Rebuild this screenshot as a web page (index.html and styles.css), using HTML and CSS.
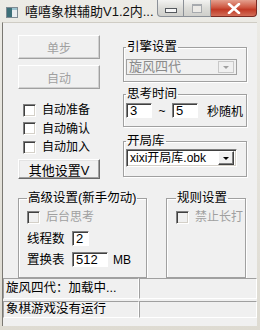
FILE: index.html
```html
<!DOCTYPE html>
<html>
<head>
  <meta charset="UTF-8">
  <title>嘻嘻象棋辅助V1.2</title>
  <link rel="stylesheet" href="styles.css">
</head>
<body>
  <div class="window">
    <div class="titlebar">
      <svg class="app-icon" width="12" height="11" viewBox="0 0 12 11">
        <rect x="0.5" y="0.5" width="11" height="10" fill="#e8ecef" stroke="#7d8a93"/>
        <rect x="1" y="1" width="5" height="9" fill="#3d6f78"/>
        <rect x="6" y="1" width="5" height="2" fill="#9cc3cf"/>
      </svg>
      <span class="title">嘻嘻象棋辅助V1.2内...</span>
      <div class="caption">
        <span class="cap-btn min"><i></i></span>
        <span class="cap-btn max"><i></i></span>
        <span class="cap-btn close">
          <svg width="14" height="11" viewBox="0 0 14 11">
            <path d="M2 1 L12 10 M12 1 L2 10" stroke="#fff" stroke-width="2.6" stroke-linecap="round"/>
          </svg>
        </span>
      </div>
    </div>

    <div class="client">
      <div class="top">
        <div class="left-col">
          <button class="btn big" disabled>单步</button>
          <button class="btn big" disabled>自动</button>
          <div class="checks">
            <label class="check"><span class="box"></span>自动准备</label>
            <label class="check"><span class="box"></span>自动确认</label>
            <label class="check"><span class="box"></span>自动加入</label>
          </div>
          <button class="btn small">其他设置V</button>
        </div>

        <div class="right-col">
          <fieldset class="group engine">
            <legend>引擎设置</legend>
            <div class="combo disabled">
              <span class="combo-text">旋风四代</span>
              <span class="drop"><i></i></span>
            </div>
          </fieldset>

          <fieldset class="group think">
            <legend>思考时间</legend>
            <div class="think-row">
              <span class="field w-time">3</span>
              <span class="tilde">~</span>
              <span class="field w-time">5</span>
              <span class="unit">秒随机</span>
            </div>
          </fieldset>

          <fieldset class="group book">
            <legend>开局库</legend>
            <div class="combo">
              <span class="combo-text">xixi开局库.obk</span>
              <span class="drop"><i></i></span>
            </div>
          </fieldset>
        </div>
      </div>

      <div class="bottom">
        <fieldset class="group adv">
          <legend>高级设置(新手勿动)</legend>
          <label class="check disabled"><span class="box"></span>后台思考</label>
          <div class="row">
            <span class="row-label">线程数</span>
            <span class="field w-thread">2</span>
          </div>
          <div class="row">
            <span class="row-label">置换表</span>
            <span class="field w-hash">512</span>
            <span class="unit">MB</span>
          </div>
        </fieldset>

        <fieldset class="group rules">
          <legend>规则设置</legend>
          <label class="check disabled"><span class="box"></span>禁止长打</label>
        </fieldset>
      </div>

      <div class="status">
        <div class="pane first">旋风四代：加载中...</div>
        <div class="pane"></div>
      </div>
      <div class="status">
        <div class="pane first">象棋游戏没有运行</div>
        <div class="pane"></div>
      </div>
    </div>
  </div>
</body>
</html>
```

FILE: styles.css
```css
body {
  margin: 0;
  font-family: "Liberation Sans", "Noto Sans CJK SC", sans-serif;
  font-size: 12px;
  color: #000;
  background: #fff;
}
.window {
  width: 260px;
  height: 330px;
  box-sizing: border-box;
  background: linear-gradient(#ecebe6, #dedbd2);
  padding: 0 3px 4px 2px;
  display: flex;
  flex-direction: column;
}

/* title bar */
.titlebar {
  height: 22px;
  display: flex;
  align-items: flex-start;
  flex-shrink: 0;
}
.app-icon {
  margin: 7px 0 0 4px;
}
.title {
  margin: 4px 0 0 7px;
  font-size: 13px;
  line-height: 15px;
  color: #111;
  white-space: nowrap;
  flex: 1;
}
.caption {
  display: flex;
}
.cap-btn {
  height: 17px;
  box-sizing: border-box;
  border: 1px solid #8b9097;
  border-top: none;
  display: flex;
  align-items: center;
  justify-content: center;
}
.cap-btn.min {
  width: 27px;
  border-radius: 0 0 0 4px;
  background: linear-gradient(#f3f3f1, #dcdcd8 50%, #cfcfcb);
}
.cap-btn.max {
  width: 27px;
  border-left: none;
  background: linear-gradient(#f3f3f1, #dcdcd8 50%, #cfcfcb);
}
.cap-btn.min i {
  width: 10px;
  height: 3px;
  margin-top: 4px;
  background: #f6f6f6;
  border: 1px solid #55595e;
}
.cap-btn.max i {
  width: 8px;
  height: 6px;
  border: 1px solid #a7aaae;
  border-top-width: 2px;
  background: #eceae6;
}
.cap-btn.close {
  width: 46px;
  border-color: #7a2a22;
  border-left: none;
  border-radius: 0 0 4px 0;
  background: linear-gradient(#e4a08e, #cf5a44 45%, #c13a26 60%, #d26e58);
}

/* client area */
.client {
  flex: 1;
  background: #f0f0f0;
  border-left: 1px solid #7a7872;
  border-top: 1px solid #cfccc4;
  padding-left: 15px;
  display: flex;
  flex-direction: column;
}
.top {
  display: flex;
  align-items: flex-start;
  height: 161px;
}
.left-col {
  width: 82px;
  padding-top: 12px;
  display: flex;
  flex-direction: column;
}
.right-col {
  width: 124px;
  margin-left: 23px;
  padding-top: 17px;
}

/* buttons */
.btn {
  font: inherit;
  padding: 0;
  background: #f0f0f0;
  border: 1px solid;
  border-color: #fff #696969 #696969 #fff;
  box-shadow: inset -1px -1px #a0a0a0, inset 1px 1px #e3e3e3;
  color: #000;
}
.btn.big {
  height: 24px;
  margin-bottom: 6px;
}
.btn:disabled {
  color: #a0a0a0;
  border-color: #fff #a0a0a0 #a0a0a0 #fff;
  box-shadow: inset -1px -1px #d0d0d0;
}
.btn.small {
  height: 20px;
  margin-top: 2px;
  font-size: 13px;
}

/* checkboxes */
.checks {
  padding: 6px 0 0 5px;
}
.check {
  display: flex;
  align-items: center;
  height: 18.5px;
  line-height: 14px;
  white-space: nowrap;
}
.box {
  flex-shrink: 0;
  width: 11px;
  height: 11px;
  margin-right: 6px;
  background: #fff;
  border: 1px solid;
  border-color: #808080 #fff #fff #808080;
  box-shadow: inset 1px 1px #404040, inset -1px -1px #d4d0c8;
}
.check.disabled {
  color: #a0a0a0;
}
.check.disabled .box {
  background: #f0f0f0;
}

/* group boxes */
.group {
  margin: 0;
  min-width: 0;
  border: 1px solid #a0a0a0;
  box-shadow: inset 1px 1px #fff, 1px 1px #fff;
  padding: 0 4px 0 2px;
}
.group legend {
  padding: 0 1px;
  line-height: 14px;
  font-size: 12.5px;
}
.engine {
  padding-top: 5px;
  padding-bottom: 6px;
}
.think {
  margin-top: 5px;
  padding: 0 1px 7px 2px;
}
.book {
  margin-top: 7px;
  padding-top: 1px;
  padding-bottom: 9px;
}

/* combos and fields */
.combo {
  height: 18px;
  box-sizing: border-box;
  display: flex;
  align-items: center;
  background: #fff;
  border: 1px solid;
  border-color: #808080 #fff #fff #808080;
  box-shadow: inset 1px 1px #404040, inset -1px -1px #d4d0c8;
  padding: 0 2px 0 3px;
  width: 111px;
}
.combo.disabled {
  height: 16px;
  background: #f0f0f0;
  color: #8a8a8a;
  border-color: #a0a0a0;
  box-shadow: none;
  padding-left: 2px;
  font-size: 13px;
}
.combo-text {
  flex: 1;
  line-height: 14px;
  white-space: nowrap;
}
.drop {
  width: 16px;
  height: 14px;
  box-sizing: border-box;
  background: #f0f0f0;
  border: 1px solid;
  border-color: #fff #404040 #404040 #fff;
  box-shadow: inset -1px -1px #808080;
  display: flex;
  align-items: center;
  justify-content: center;
}
.drop i {
  width: 0;
  height: 0;
  border-left: 3px solid transparent;
  border-right: 3px solid transparent;
  border-top: 3px solid #000;
}
.combo.disabled .drop {
  height: 12px;
  border-color: #c8c8c8;
  box-shadow: none;
}
.combo.disabled .drop i {
  border-top-color: #a0a0a0;
}

.field {
  display: inline-block;
  flex-shrink: 0;
  box-sizing: border-box;
  height: 15px;
  line-height: 13px;
  padding-left: 3px;
  background: #fff;
  border: 1px solid;
  border-color: #808080 #fff #fff #808080;
  box-shadow: inset 1px 1px #404040;
  font-size: 13px;
}
.think-row {
  display: flex;
  align-items: center;
  padding-top: 1px;
  white-space: nowrap;
}
.w-time {
  width: 26px;
}
.tilde {
  width: 20px;
  flex-shrink: 0;
  text-align: center;
}
.think-row .unit {
  flex-shrink: 0;
  margin-left: 9px;
}

/* bottom groups */
.bottom {
  display: flex;
  align-items: flex-start;
  margin-top: 7px;
}
.adv {
  width: 129px;
  box-sizing: border-box;
  padding: 0 0 8px 8px;
  height: 87px;
}
.rules {
  width: 80px;
  box-sizing: border-box;
  margin-left: 19px;
  padding: 0 0 0 9px;
  height: 87px;
}
.adv .check,
.rules .check {
  height: 16px;
  margin-top: 4px;
}
.row {
  display: flex;
  align-items: center;
  margin-top: 6px;
}
.row-label {
  width: 45px;
  line-height: 14px;
  font-size: 12.5px;
}
.w-thread {
  width: 17px;
}
.w-hash {
  width: 36px;
}
.row .unit {
  margin-left: 5px;
}

/* status bar */
.status {
  display: flex;
  margin-left: -15px;
  height: 21px;
}
.status:first-of-type {
  margin-top: 8px;
}
.status + .status {
  margin-top: 2px;
  height: 17px;
}
.pane {
  box-sizing: border-box;
  border-top: 1px solid #a0a0a0;
  border-left: 1px solid #a0a0a0;
  border-bottom: 1px solid #fff;
  border-right: 1px solid #fff;
  padding-left: 2px;
  line-height: 19px;
  font-size: 12.5px;
  white-space: nowrap;
  flex: 1;
}
.pane.first {
  flex: 0 0 136px;
}
.status + .status .pane {
  line-height: 15px;
}
```
